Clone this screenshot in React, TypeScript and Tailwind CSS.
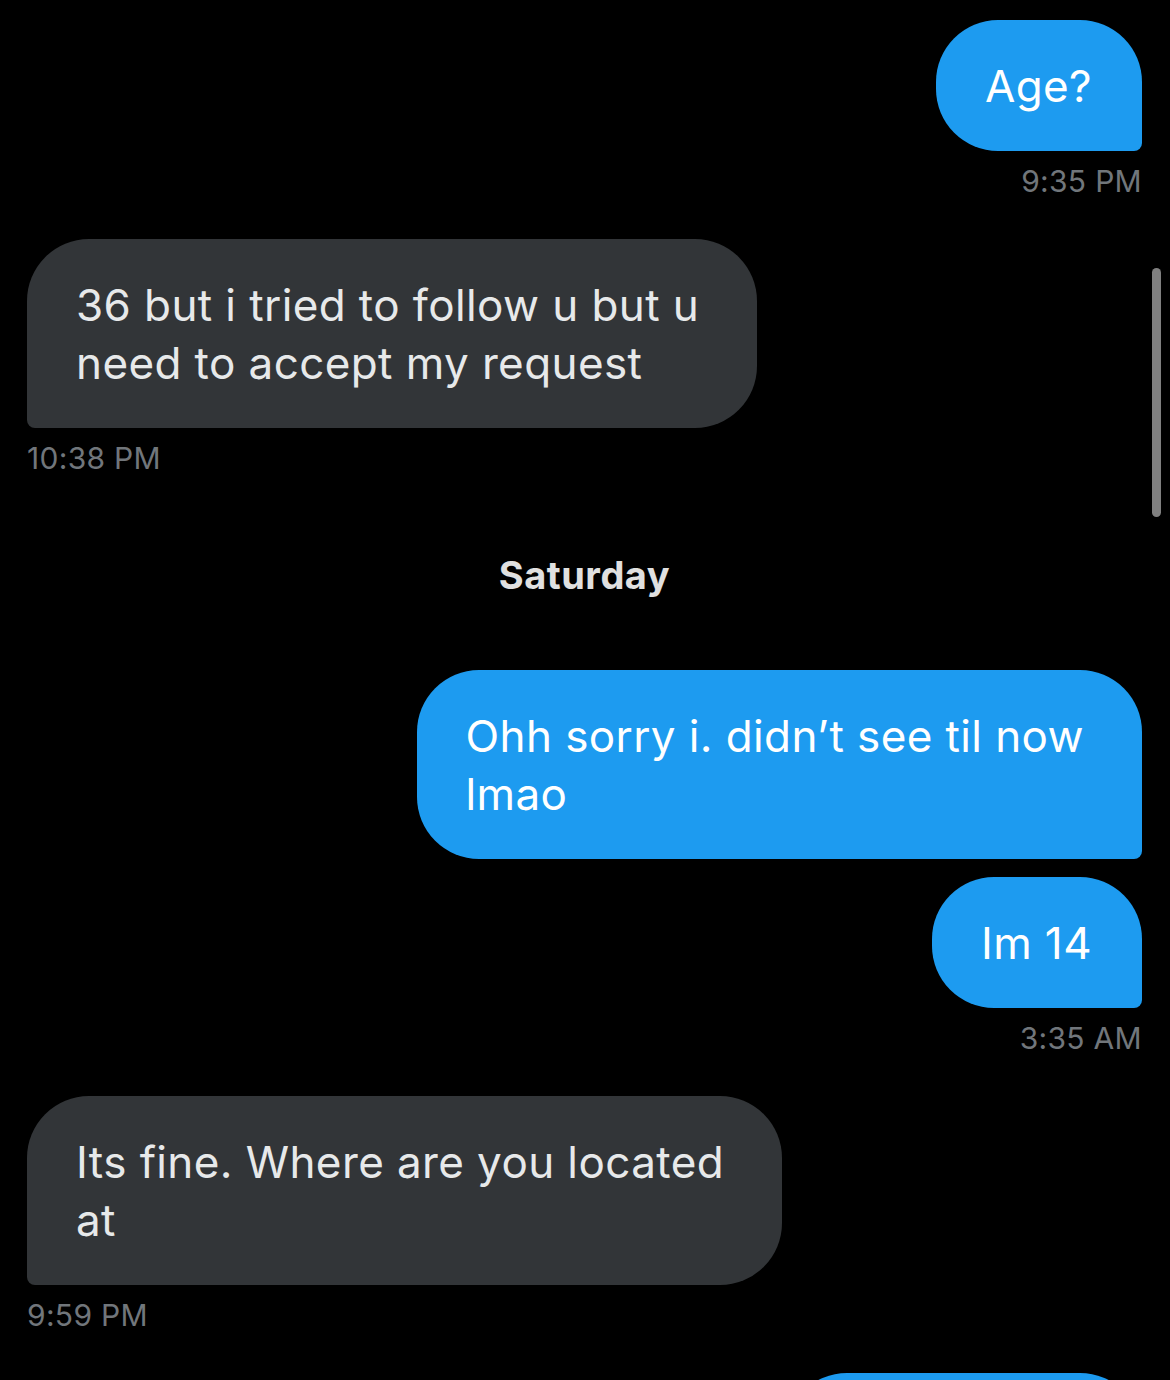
const font = { fontFamily: "Inter, 'Noto Sans', sans-serif" };

type Msg =
  | { kind: "sent" | "recv"; lines: string[]; time?: string; gap?: string }
  | { kind: "day"; label: string };

const messages: Msg[] = [
  { kind: "sent", lines: ["Age?"], time: "9:35 PM" },
  { kind: "recv", lines: ["36 but i tried to follow u but u", "need to accept my request"], time: "10:38 PM" },
  { kind: "day", label: "Saturday" },
  { kind: "sent", lines: ["Ohh sorry i. didn\u2019t see til now", "lmao"] },
  { kind: "sent", lines: ["Im 14"], time: "3:35 AM", gap: "mt-[18px]" },
  { kind: "recv", lines: ["Its fine. Where are you located", "at"], time: "9:59 PM" },
];

function Bubble({ kind, lines }: { kind: "sent" | "recv"; lines: string[] }) {
  const sent = kind === "sent";
  const multi = lines.length > 1;
  return (
    <div
      className={`${
        sent
          ? "bg-[#1d9bf0] text-white rounded-[62px] rounded-br-[8px]"
          : "bg-[#323538] text-[#e7e9ea] rounded-[62px] rounded-bl-[8px]"
      } pl-[49px] py-[36.5px] ${multi ? "pr-[58px]" : "pr-[50px]"}`}
    >
      {lines.map((l, i) => (
        <div key={i} className="text-[44px] leading-[58px] tracking-[0.4px] whitespace-nowrap">
          {l}
        </div>
      ))}
    </div>
  );
}

export default function App() {
  return (
    <div className="relative w-[1170px] h-[1380px] bg-black overflow-hidden" style={font}>
      <div className="flex flex-col pl-[27px] pr-[28px] pt-[20px]">
        {messages.map((m, i) => {
          if (m.kind === "day") {
            return (
              <div key={i} className="mt-[79px] mb-[75px] text-center text-[38px] leading-[40px] font-bold tracking-[0.5px] text-[#e0e0e0]">
                {m.label}
              </div>
            );
          }
          const sent = m.kind === "sent";
          const prev = messages[i - 1];
          const prevHasTime = prev && prev.kind !== "day" && prev.time;
          const mt = i === 0 || (prev && prev.kind === "day") ? "" : m.gap ?? (prevHasTime ? "mt-[40px]" : "mt-[19px]");
          return (
            <div key={i} className={`flex flex-col ${sent ? "items-end" : "items-start"} ${mt}`}>
              <Bubble kind={m.kind} lines={m.lines} />
              {m.time && (
                <div className="mt-[12px] text-[30px] leading-[36px] text-[#71767b] tracking-[0.3px]">{m.time}</div>
              )}
            </div>
          );
        })}
        {/* next sent message, just peeking in at the bottom edge */}
        <div className="mt-[40px] self-end w-[357px] h-[131px] bg-[#1d9bf0] rounded-[62px] rounded-br-[8px]" />
      </div>
      {/* scroll indicator */}
      <div className="absolute left-[1152px] top-[268px] w-[9px] h-[249px] rounded-full bg-[#808080]" />
    </div>
  );
}
